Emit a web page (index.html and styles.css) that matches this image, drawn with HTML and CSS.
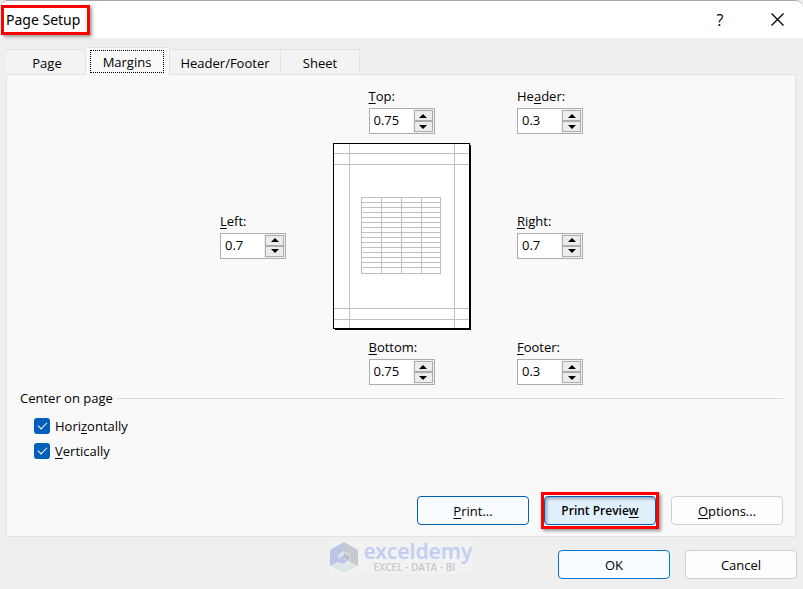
FILE: index.html
```html
<!DOCTYPE html>
<html lang="en">
	<head>
		<meta charset="UTF-8" />
		<meta name="viewport" content="width=device-width, initial-scale=1.0" />
		<title>Page Setup</title>
		<link rel="stylesheet" href="styles.css">
	</head>
	<body>
		<div class="dialog">
			<header class="titlebar">
				<h1 class="title marked">Page Setup</h1>
				<button class="title-btn" type="button" aria-label="Help">?</button>
				<button class="title-btn" type="button" aria-label="Close">
					<svg width="13" height="13" viewBox="0 0 13 13">
						<path d="M0.5 0.5L12.5 12.5M12.5 0.5L0.5 12.5" stroke="#000" stroke-width="1.3" fill="none" />
					</svg>
				</button>
			</header>

			<main class="content">
				<div class="tabs" role="tablist">
					<button class="tab" type="button" role="tab">Page</button>
					<button class="tab active" type="button" role="tab" aria-selected="true"><span class="focus">Margins</span></button>
					<button class="tab wide" type="button" role="tab">Header/Footer</button>
					<button class="tab" type="button" role="tab">Sheet</button>
				</div>

				<section class="panel">
					<div class="margins">
						<div class="field top">
							<label for="top"><u>T</u>op:</label>
							<div class="spinner">
								<input id="top" type="text" value="0.75" />
								<div class="arrows">
									<button type="button" class="up" aria-label="Increase top"></button>
									<button type="button" class="down" aria-label="Decrease top"></button>
								</div>
							</div>
						</div>
						<div class="field header">
							<label for="header">He<u>a</u>der:</label>
							<div class="spinner">
								<input id="header" type="text" value="0.3" />
								<div class="arrows">
									<button type="button" class="up" aria-label="Increase header"></button>
									<button type="button" class="down" aria-label="Decrease header"></button>
								</div>
							</div>
						</div>
						<div class="field left">
							<label for="left"><u>L</u>eft:</label>
							<div class="spinner">
								<input id="left" type="text" value="0.7" />
								<div class="arrows">
									<button type="button" class="up" aria-label="Increase left"></button>
									<button type="button" class="down" aria-label="Decrease left"></button>
								</div>
							</div>
						</div>

						<!-- Sheet preview with margin guides -->
						<svg class="sheet" width="138" height="187" viewBox="0 0 138 187" shape-rendering="crispEdges">
							<path d="M2 2H138V187H2Z" fill="#000" />
							<rect x="0.5" y="0.5" width="136" height="185" fill="#fff" stroke="#000" />
							<g fill="none" stroke="#c0c0c0">
								<path d="M1 10.5H136M1 21.5H136M1 165.5H136M1 176.5H136" />
								<path d="M16.5 1V185M121.5 1V185" />
								<path d="M28.5 54.5H107.5V130.5H28.5ZM48.5 54V130M68.5 54V130M88.5 54V130" />
								<path d="M28 59.5H108M28 64.5H108M28 69.5H108M28 74.5H108M28 79.5H108M28 84.5H108M28 89.5H108M28 94.5H108M28 99.5H108M28 104.5H108M28 109.5H108M28 114.5H108M28 119.5H108M28 124.5H108" />
							</g>
						</svg>

						<div class="field right">
							<label for="right"><u>R</u>ight:</label>
							<div class="spinner">
								<input id="right" type="text" value="0.7" />
								<div class="arrows">
									<button type="button" class="up" aria-label="Increase right"></button>
									<button type="button" class="down" aria-label="Decrease right"></button>
								</div>
							</div>
						</div>
						<div class="field bottom">
							<label for="bottom"><u>B</u>ottom:</label>
							<div class="spinner">
								<input id="bottom" type="text" value="0.75" />
								<div class="arrows">
									<button type="button" class="up" aria-label="Increase bottom"></button>
									<button type="button" class="down" aria-label="Decrease bottom"></button>
								</div>
							</div>
						</div>
						<div class="field footer">
							<label for="footer"><u>F</u>ooter:</label>
							<div class="spinner">
								<input id="footer" type="text" value="0.3" />
								<div class="arrows">
									<button type="button" class="up" aria-label="Increase footer"></button>
									<button type="button" class="down" aria-label="Decrease footer"></button>
								</div>
							</div>
						</div>
					</div>

					<div class="center-group">
						<h2 class="group-title">Center on page</h2>
						<label class="check"><input type="checkbox" checked /><span>Hori<u>z</u>ontally</span></label>
						<label class="check"><input type="checkbox" checked /><span><u>V</u>ertically</span></label>
					</div>

					<div class="actions">
						<button class="btn hot" type="button"><span><u>P</u>rint...</span></button>
						<div class="marked preview">
							<button class="btn pressed" type="button"><span>Print Previe<u>w</u></span></button>
						</div>
						<button class="btn" type="button"><span><u>O</u>ptions...</span></button>
					</div>
				</section>
			</main>

			<footer class="bottom-bar">
				<div class="brand">
					<svg width="28" height="32" viewBox="0 0 28 32">
						<path d="M14 0L0 8V24L8 20V13L14 9Z" fill="#bac6e4" />
						<path d="M14 0L28 8V24L20 20V13L14 9Z" fill="#c5cace" />
						<path d="M0 24L8 20L14 23L20 20L28 24L14 31Z" fill="#dde7e9" />
						<path d="M14 9L8 13V20L14 17Z" fill="#dfe5ef" />
						<path d="M14 9L20 13V20L14 17Z" fill="#d8dce0" />
						<path d="M14 11L19 14V19L14 16Z" fill="#b8bfc8" />
						<path d="M8 20V17L14 13V17L18 19L14 22Z" fill="#b9c7ec" />
					</svg>
					<div class="brand-text">
						<div class="brand-name">exceldemy</div>
						<div class="brand-tag">EXCEL - DATA - BI</div>
					</div>
				</div>
				<div class="confirm">
					<button class="btn default" type="button">OK</button>
					<button class="btn" type="button">Cancel</button>
				</div>
			</footer>
		</div>
	</body>
</html>
```
FILE: styles.css
```css
* {
	box-sizing: border-box;
}
body {
	margin: 0;
	background: #efefef;
	font-family: 'Open Sans', 'Noto Sans', sans-serif;
	font-size: 13px;
	line-height: 20px;
	color: #000;
}
button,
input {
	font: inherit;
	color: inherit;
	margin: 0;
	padding: 0;
}
u {
	text-underline-offset: 2px;
	text-decoration-thickness: 1px;
	text-decoration-skip-ink: none;
}
.dialog {
	min-height: 100vh;
	border-top: 1px solid #a9a9a9;
	border-radius: 8px 8px 0 0;
	overflow: hidden;
}
.titlebar {
	display: flex;
	align-items: center;
	height: 37px;
	padding-right: 8px;
	background: #fff;
}
.title {
	margin: 0 auto 0 1px;
	padding: 0 7px 0 2px;
	font-family: 'Noto Sans', sans-serif;
	font-size: 14px;
	font-weight: 400;
	line-height: 24px;
}
.marked {
	border: 3px solid #fe0000;
	box-shadow: 2px 2px 3px rgba(0, 0, 0, 0.4);
}
.title-btn {
	display: flex;
	align-items: center;
	justify-content: center;
	width: 36px;
	height: 30px;
	margin-left: 21px;
	border: none;
	background: none;
	font-size: 16px;
}
.content {
	padding: 9px 7px 0 6px;
}
.tabs {
	display: flex;
	align-items: flex-end;
	margin-bottom: -1px;
}
.tab {
	width: 79px;
	height: 26px;
	padding-top: 2px;
	border: 1px solid #e3e3e3;
	border-left: none;
	background: #f3f3f3;
}
.tab:first-child {
	width: 80px;
	padding-left: 3px;
}
.tab.wide {
	width: 111px;
}
.tab.active {
	width: 84px;
	height: 28px;
	padding: 0 5px 0 4px;
	border-bottom: none;
	background: #f9f9f9;
}
.focus {
	display: block;
	height: 23px;
	border: 1px dotted #000;
	line-height: 23px;
}
.panel {
	padding: 13px 12px 7px 13px;
	border: 1px solid #e3e3e3;
	background: #f9f9f9;
}
.margins {
	display: grid;
	grid-template-columns: 66px 137px 66px;
	grid-template-areas:
		". top header"
		"left sheet right"
		". bottom footer";
	gap: 9px 47px;
	align-items: center;
	justify-items: center;
	justify-content: center;
}
.top {
	grid-area: top;
}
.header {
	grid-area: header;
}
.left {
	grid-area: left;
}
.sheet {
	grid-area: sheet;
	justify-self: start;
}
.right {
	grid-area: right;
}
.bottom {
	grid-area: bottom;
}
.footer {
	grid-area: footer;
}
.field {
	width: 66px;
}
.left,
.right {
	padding-bottom: 2px;
}
.field label {
	display: block;
	margin-bottom: 4px;
	line-height: 16px;
}
.spinner {
	display: flex;
	height: 26px;
	border: 1px solid #abadb3;
	background: #fff;
}
.spinner input {
	flex: 1;
	min-width: 0;
	padding: 0 0 2px 4px;
	border: none;
	outline: none;
	background: #fff;
}
.arrows {
	display: flex;
	flex-direction: column;
	width: 21px;
	padding: 1px;
	background: #f0f0f0;
}
.arrows button {
	display: flex;
	align-items: center;
	justify-content: center;
	flex: 1;
	border: 1px solid #adadad;
	background: #ececec;
}
.arrows button::after {
	content: '';
	border: 4px solid transparent;
}
.arrows .up::after {
	border-top: none;
	border-bottom-color: #000;
}
.arrows .down::after {
	border-bottom: none;
	border-top-color: #000;
}
.center-group {
	padding-top: 3px;
}
.group-title {
	display: flex;
	align-items: center;
	gap: 4px;
	margin: 0 0 5px;
	font-size: 13px;
	font-weight: 400;
}
.group-title::after {
	content: '';
	flex: 1;
	height: 1px;
	background: #dcdcdc;
}
.check {
	display: flex;
	align-items: center;
	gap: 5px;
	width: 120px;
	height: 25px;
	margin-left: 14px;
}
.check input {
	display: flex;
	align-items: center;
	justify-content: center;
	appearance: none;
	width: 16px;
	height: 16px;
	border-radius: 3px;
	background: #005fb8;
}
.check input:checked::after {
	content: '';
	width: 8px;
	height: 4px;
	margin-bottom: 2px;
	border: solid #fff;
	border-width: 0 0 1px 1px;
	transform: rotate(-45deg);
}
.actions {
	display: flex;
	justify-content: flex-end;
	align-items: center;
	gap: 12px;
	margin-top: 29px;
}
.btn {
	width: 112px;
	height: 29px;
	border: 1px solid #d0d0d0;
	border-radius: 4px;
	background: #fdfdfd;
}
.btn.hot {
	border-color: #005fb8;
	background: #f8fbff;
}
.btn.default {
	border-color: #0078d4;
	background: #f8fbff;
}
.btn.pressed {
	display: block;
	border-color: #005fb8;
	background: #e0f0ff;
	box-shadow: inset 2px 2px 3px rgba(0, 0, 0, 0.3);
	font-size: 12px;
	font-weight: 600;
}
.preview {
	padding: 1px 0;
}
.bottom-bar {
	display: grid;
	grid-template-columns: 1fr auto 1fr;
	align-items: start;
	padding: 5px 6px;
}
.brand {
	grid-column: 2;
	display: flex;
	align-items: center;
	gap: 5px;
	height: 32px;
	background: #f2f2f2;
}
.brand-name {
	font-family: 'Noto Sans', sans-serif;
	font-size: 21px;
	font-weight: 600;
	line-height: 18px;
	color: #c3cff0;
}
.brand-tag {
	padding-left: 10px;
	font-size: 10px;
	font-weight: 600;
	line-height: 14px;
	color: #c6cacd;
}
.confirm {
	display: flex;
	justify-content: flex-end;
	gap: 15px;
	margin-top: 8px;
}
```
